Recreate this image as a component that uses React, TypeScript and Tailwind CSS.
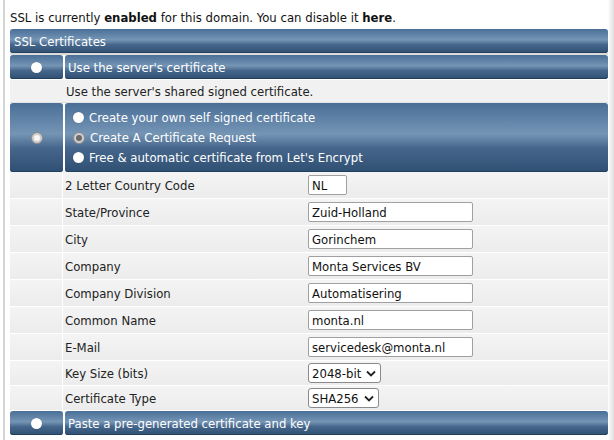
import React from 'react'

const bar =
  'bg-[linear-gradient(to_bottom,#4a6f97_0%,#6688ab_30%,#7595b5_45%,#46678c_65%,#2f4f72_100%)] text-white shadow-[inset_0_-1px_0_#22405e]'

const fields = [
  { label: '2 Letter Country Code', value: 'NL', w: 'w-[39px]' },
  { label: 'State/Province', value: 'Zuid-Holland', w: 'w-[165px]' },
  { label: 'City', value: 'Gorinchem', w: 'w-[165px]' },
  { label: 'Company', value: 'Monta Services BV', w: 'w-[165px]' },
  { label: 'Company Division', value: 'Automatisering', w: 'w-[165px]' },
  { label: 'Common Name', value: 'monta.nl', w: 'w-[165px]' },
  { label: 'E-Mail', value: 'servicedesk@monta.nl', w: 'w-[165px]' },
]

const selects = [
  { label: 'Key Size (bits)', value: '2048-bit', w: 'w-[73px]' },
  { label: 'Certificate Type', value: 'SHA256', w: 'w-[71px]' },
]

function Dot() {
  return <span className="inline-block w-[11px] h-[11px] rounded-full bg-white shadow-[0_0_1px_#0006]" />
}

function Ring({ dark }: { dark?: boolean }) {
  return (
    <span className="inline-flex items-center justify-center w-[12px] h-[12px] rounded-full bg-[#cfcfcf] border border-[#8a8a8a]">
      <span className={`w-[6px] h-[6px] rounded-full ${dark ? 'bg-[#6a6a6a]' : 'bg-[#f6f6f6]'}`} />
    </span>
  )
}

function Chevron() {
  return (
    <svg width="10" height="7" viewBox="0 0 10 7" className="ml-[5px]">
      <path d="M1 1.5 L5 5.5 L9 1.5" fill="none" stroke="#222" strokeWidth="1.8" />
    </svg>
  )
}

export default function App() {
  return (
    <div className="w-[614px] h-[440px] overflow-hidden bg-white flex text-[13px] leading-none text-[#111]" style={{ fontFamily: '"DejaVu Sans Condensed", "DejaVu Sans", sans-serif' }}>
      <div className="w-[3px]" />
      <div className="w-[2px] bg-[#d4d4d4]" />
      <div className="w-[5px]" />
      <div className="w-[598px] flex flex-col">
        <div className="h-[29px] pt-[11px]">
          SSL is currently <b>enabled</b> for this domain. You can disable it <b>here</b>.
        </div>

        <div className={`${bar} h-[24px] rounded-[3px] flex items-center pl-[4px]`}>SSL Certificates</div>

        <div className="h-[2px] bg-[#dcdcdc]" />
        <div className="flex h-[24px] gap-[2px]">
          <div className={`${bar} w-[53px] rounded-[3px] flex items-center justify-center`}><Dot /></div>
          <div className={`${bar} flex-1 rounded-[3px] flex items-center pl-[3px]`}>Use the server's certificate</div>
        </div>
        <div className="h-[23px] flex bg-[#f1f1f1] border-t border-white">
          <div className="w-[55px]" />
          <div className="flex items-center pl-[1px] text-[#222]">Use the server's shared signed certificate.</div>
        </div>

        <div className="h-[1px] bg-[#e2e2e2]" />
        <div className="flex h-[69px] gap-[2px]">
          <div className={`${bar} w-[53px] rounded-[3px] flex items-center justify-center`}><Ring /></div>
          <div className={`${bar} flex-1 rounded-[3px] flex flex-col justify-center pl-[8px]`}>
            <div className="h-[20px] flex items-center gap-[5px]"><Dot />Create your own self signed certificate</div>
            <div className="h-[20px] flex items-center gap-[5px]"><Ring dark />Create A Certificate Request</div>
            <div className="h-[20px] flex items-center gap-[5px]"><Dot />Free &amp; automatic certificate from Let's Encrypt</div>
          </div>
        </div>

        {fields.map(f => (
          <div key={f.label} className="h-[27px] flex border-b border-white bg-[linear-gradient(to_bottom,#f4f4f4,#ececec)] text-[#222]">
            <div className="w-[53px] border-r border-white" />
            <div className="w-[245px] flex items-center pl-[2px]">{f.label}</div>
            <div className="flex items-center">
              <div className={`${f.w} h-[20px] border border-[#a0a0a0] rounded-[2px] bg-white flex items-center pl-[3px] text-[#111]`}>{f.value}</div>
            </div>
          </div>
        ))}

        {selects.map(s => (
          <div key={s.label} className="h-[25px] flex border-b border-white bg-[linear-gradient(to_bottom,#f4f4f4,#ececec)] text-[#222]">
            <div className="w-[53px] border-r border-white" />
            <div className="w-[245px] flex items-center pl-[2px]">{s.label}</div>
            <div className="flex items-center">
              <div className={`${s.w} h-[20px] border border-[#8a8a8a] rounded-[3px] bg-white flex items-center pl-[3px] text-[#111]`}>{s.value}<Chevron /></div>
            </div>
          </div>
        ))}

        <div className="flex h-[24px] gap-[2px]">
          <div className={`${bar} w-[53px] rounded-[3px] flex items-center justify-center`}><Dot /></div>
          <div className={`${bar} flex-1 rounded-[3px] flex items-center pl-[3px]`}>Paste a pre-generated certificate and key</div>
        </div>
      </div>
      <div className="w-[6px] bg-[linear-gradient(to_right,#ffffff,#dedede)]" />
    </div>
  )
}
